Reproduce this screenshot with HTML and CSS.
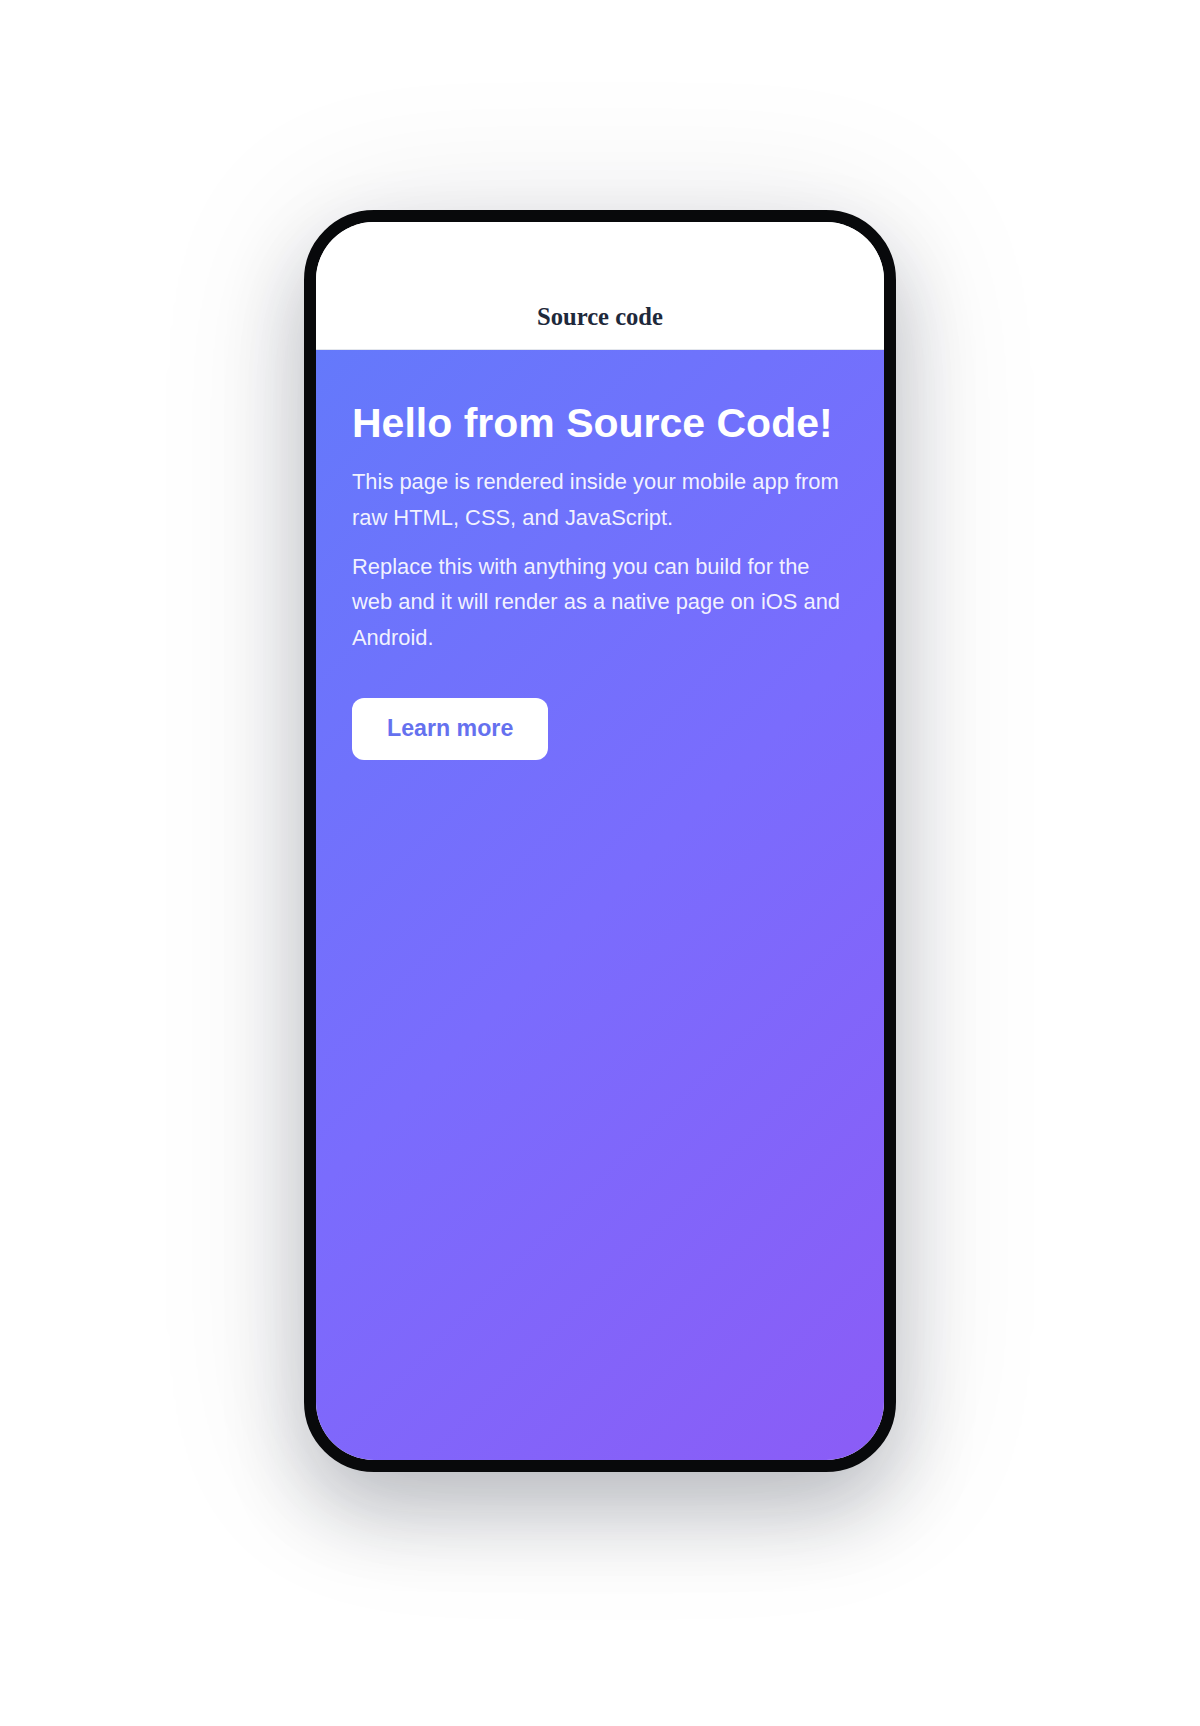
FILE: index.html
```html
<!DOCTYPE html>
<html lang="en">
<head>
<meta charset="utf-8">
<title>Source code</title>
<link rel="stylesheet" href="styles.css">
</head>
<body>
<div class="stage">
  <div class="phone">
    <div class="screen">
      <header class="app-bar">
        <span class="app-title">Source code</span>
      </header>
      <main class="content">
        <h1 class="headline">Hello from Source Code!</h1>
        <p class="copy">This page is rendered inside your mobile app from raw HTML, CSS, and JavaScript.</p>
        <p class="copy">Replace this with anything you can build for the web and it will render as a native page on iOS and Android.</p>
        <a class="btn" href="#">Learn more</a>
      </main>
    </div>
  </div>
</div>
</body>
</html>
```

FILE: styles.css
```css
* { box-sizing: border-box; }

html, body {
  margin: 0;
  padding: 0;
  background: #ffffff;
}

.stage {
  min-height: 1726px;
  display: flex;
  justify-content: center;
  align-items: flex-start;
  padding-top: 210px;
}

.phone {
  width: 592px;
  height: 1262px;
  border: 12px solid #08090b;
  border-radius: 70px;
  background: #08090b;
  box-shadow: 0 40px 80px rgba(15, 23, 42, 0.24), 0 10px 160px rgba(15, 23, 42, 0.10);
}

.screen {
  width: 100%;
  height: 100%;
  border-radius: 58px;
  overflow: hidden;
  display: flex;
  flex-direction: column;
  background: #ffffff;
}

.app-bar {
  height: 128px;
  flex: 0 0 auto;
  display: flex;
  align-items: flex-end;
  justify-content: center;
  padding-bottom: 18px;
  background: #ffffff;
  border-bottom: 1.5px solid #e3e6ec;
}

.app-title {
  font-family: "Liberation Serif", "Times New Roman", serif;
  font-weight: 700;
  font-size: 24.6px;
  color: #1e293b;
}

.content {
  flex: 1 1 auto;
  padding: 50px 36px 0;
  background: linear-gradient(135deg, #6479fb 0%, #7a6cfd 50%, #8b5cf6 100%);
  font-family: "Liberation Sans", Arial, sans-serif;
  color: #ffffff;
}

.headline {
  margin: 0 0 17px;
  font-size: 41px;
  font-weight: 700;
  line-height: normal;
  color: #ffffff;
}

.copy {
  margin: 0 0 13.5px;
  font-size: 21.9px;
  line-height: 35.6px;
  color: rgba(255, 255, 255, 0.92);
}

.btn {
  display: inline-block;
  margin-top: 29px;
  padding: 17.5px 35px;
  background: #ffffff;
  color: #6571ef;
  font-size: 23.2px;
  font-weight: 700;
  text-decoration: none;
  border-radius: 12px;
  line-height: normal;
}
```
